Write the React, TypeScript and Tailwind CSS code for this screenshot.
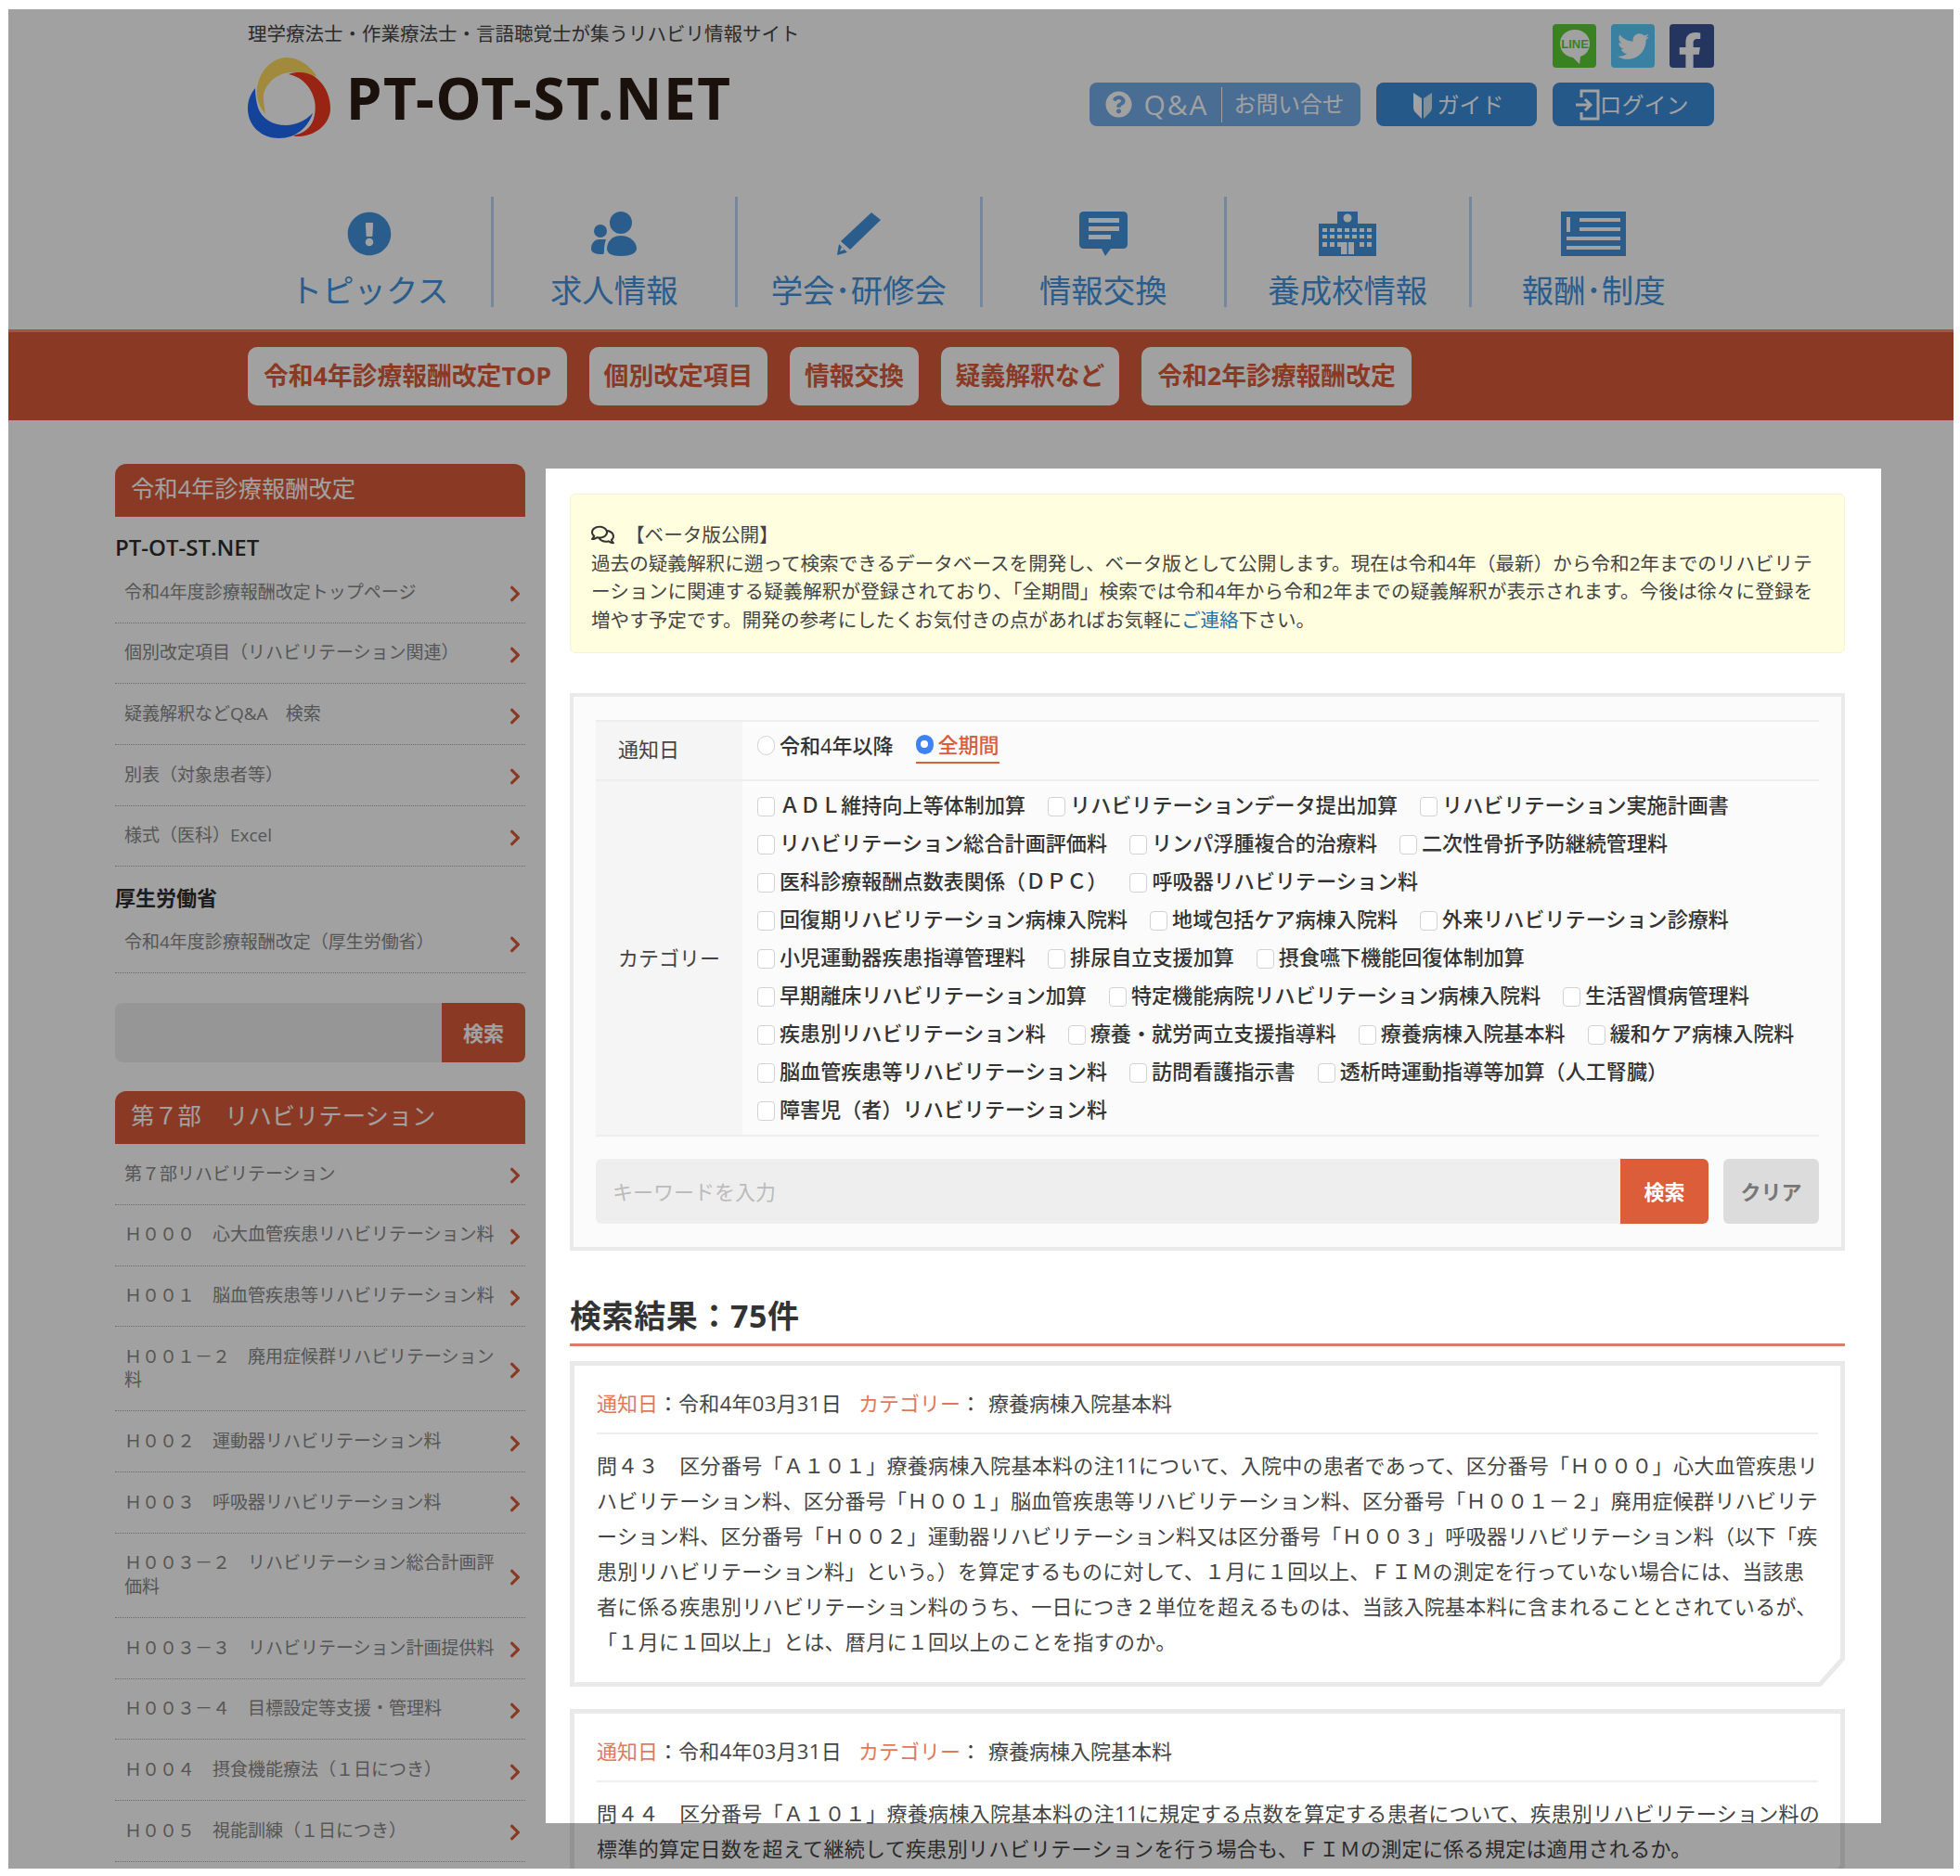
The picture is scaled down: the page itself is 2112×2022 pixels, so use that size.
import React from "react";
import {
  FaChevronRight,
  FaExclamationCircle,
  FaFacebookF,
  FaQuestionCircle,
  FaRegComments,
  FaTwitter,
} from "react-icons/fa";

const checkRows = [
  ["ＡＤＬ維持向上等体制加算", "リハビリテーションデータ提出加算", "リハビリテーション実施計画書"],
  ["リハビリテーション総合計画評価料", "リンパ浮腫複合的治療料", "二次性骨折予防継続管理料"],
  ["医科診療報酬点数表関係（ＤＰＣ）", "呼吸器リハビリテーション料"],
  ["回復期リハビリテーション病棟入院料", "地域包括ケア病棟入院料", "外来リハビリテーション診療料"],
  ["小児運動器疾患指導管理料", "排尿自立支援加算", "摂食嚥下機能回復体制加算"],
  ["早期離床リハビリテーション加算", "特定機能病院リハビリテーション病棟入院料", "生活習慣病管理料"],
  ["疾患別リハビリテーション料", "療養・就労両立支援指導料", "療養病棟入院基本料", "緩和ケア病棟入院料"],
  ["脳血管疾患等リハビリテーション料", "訪問看護指示書", "透析時運動指導等加算（人工腎臓）"],
  ["障害児（者）リハビリテーション料"],
];

const part7 = [
  "第７部リハビリテーション",
  "Ｈ０００　心大血管疾患リハビリテーション料",
  "Ｈ００１　脳血管疾患等リハビリテーション料",
  "Ｈ００１－２　廃用症候群リハビリテーション料",
  "Ｈ００２　運動器リハビリテーション料",
  "Ｈ００３　呼吸器リハビリテーション料",
  "Ｈ００３－２　リハビリテーション総合計画評価料",
  "Ｈ００３－３　リハビリテーション計画提供料",
  "Ｈ００３－４　目標設定等支援・管理料",
  "Ｈ００４　摂食機能療法（１日につき）",
  "Ｈ００５　視能訓練（１日につき）",
];

const pills = [
  { label: "令和4年診療報酬改定TOP", width: "w-[344px]" },
  { label: "個別改定項目", width: "w-[192px]" },
  { label: "情報交換", width: "w-[139px]" },
  { label: "疑義解釈など", width: "w-[192px]" },
  { label: "令和2年診療報酬改定", width: "w-[291px]" },
];

const q43 = [
  "問４３　区分番号「Ａ１０１」療養病棟入院基本料の注11について、入院中の患者であって、区分番号「Ｈ０００」心大血管疾患リ",
  "ハビリテーション料、区分番号「Ｈ００１」脳血管疾患等リハビリテーション料、区分番号「Ｈ００１－２」廃用症候群リハビリテ",
  "ーション料、区分番号「Ｈ００２」運動器リハビリテーション料又は区分番号「Ｈ００３」呼吸器リハビリテーション料（以下「疾",
  "患別リハビリテーション料」という。）を算定するものに対して、１月に１回以上、ＦＩＭの測定を行っていない場合には、当該患",
  "者に係る疾患別リハビリテーション料のうち、一日につき２単位を超えるものは、当該入院基本料に含まれることとされているが、",
  "「１月に１回以上」とは、暦月に１回以上のことを指すのか。",
];

const q44 = [
  "問４４　区分番号「Ａ１０１」療養病棟入院基本料の注11に規定する点数を算定する患者について、疾患別リハビリテーション料の",
  "標準的算定日数を超えて継続して疾患別リハビリテーションを行う場合も、ＦＩＭの測定に係る規定は適用されるか。",
];

function UsersIcon() {
  return (
    <svg width="50" height="48" viewBox="0 0 50 48" fill="#4394de">
      <circle cx="32" cy="12" r="12" />
      <path d="M32 26C22 26 17 33 17 40C17 45 22 48 32 48C42 48 49 45 49 40C49 33 42 26 32 26Z" />
      <circle cx="10" cy="21" r="7" />
      <path d="M9 30C3 30 0 35 0 40C0 44 4 46 12 46C14 46 14 44 14 41C14 37 15 33 16 30Z" />
    </svg>
  );
}

function PencilIcon() {
  return (
    <svg width="49" height="48" viewBox="0 0 49 48" fill="#4394de">
      <path d="M38 1L48 9L15 41L5 32Z" />
      <path d="M3 35L12 44L1 47Z" />
      <path d="M6 38L9 41L4 43Z" fill="#fff" />
    </svg>
  );
}

function ChatIcon() {
  return (
    <svg width="52" height="48" viewBox="0 0 52 48">
      <path d="M5 0H47Q52 0 52 5V35Q52 40 47 40H34L28 48L24 40H5Q0 40 0 35V5Q0 0 5 0Z" fill="#4394de" />
      <rect x="10" y="7" width="33" height="5" fill="#fff" />
      <rect x="10" y="16" width="33" height="5" fill="#fff" />
      <rect x="10" y="25" width="24" height="5" fill="#fff" />
    </svg>
  );
}

function SchoolIcon() {
  const cols = [4, 12, 20, 28, 36, 44, 52];
  return (
    <svg width="62" height="48" viewBox="0 0 62 48">
      <rect x="20" y="0" width="22" height="16" fill="#4394de" />
      <rect x="0" y="13" width="62" height="35" fill="#4394de" />
      <circle cx="31" cy="7" r="4.5" fill="#fff" />
      {[18, 25].map((y) => cols.map((x) => <rect key={x + "-" + y} x={x} y={y} width="5" height="4" fill="#fff" />))}
      {cols.filter((x) => x < 24 || x > 36).map((x) => <rect key={x} x={x} y="33" width="5" height="5" fill="#fff" />)}
      <rect x="24" y="33" width="14" height="13" fill="#fff" />
      <rect x="30.5" y="33" width="1.5" height="13" fill="#4394de" />
    </svg>
  );
}

function NewsIcon() {
  return (
    <svg width="70" height="48" viewBox="0 0 70 48">
      <rect width="70" height="48" fill="#4394de" />
      <rect x="6" y="6" width="4" height="16" fill="#fff" />
      <rect x="20" y="7" width="44" height="4" fill="#fff" />
      <rect x="20" y="17" width="44" height="4" fill="#fff" />
      <rect x="6" y="27" width="58" height="4" fill="#fff" />
      <rect x="6" y="37" width="58" height="4" fill="#fff" />
    </svg>
  );
}

function LogoMark() {
  return (
    <svg width="89" height="87" viewBox="0 0 89 87">
      <path d="M19 61C10 50 9 40 10 33C13 12 28 0 42 0C56 0 68 10 74 20L71 21C62 17 52 15 42 16.5C28 19 16 32 17 44C17.5 51 18 56 19 61Z" fill="#ffdb60" />
      <path d="M44 18C55 14 68 16 76 24C85 32 89 44 89 55C89 72 72 86 51 85L49 84C60 82 68 76 71 66C76 50 70 34 59 25C54 21 49 19 44 18Z" fill="#f23a20" />
      <path d="M8 33C2 40 0 48 0 55C0 74 15 87 34 87C52 87 65 75 70 60C62 68 52 73 41 73C27 73 15 66 11 54C9 47 8 40 8 33Z" fill="#1f6af5" />
    </svg>
  );
}

function NavItem({ icon, label, last }: { icon: React.ReactNode; label: string; last?: boolean }) {
  return (
    <div className={"w-[263.5px] shrink-0 h-[119px] pt-4 flex flex-col items-center " + (last ? "" : "border-r-[3px] border-[#bcd6f5]")}>
      <div className="h-12 flex items-center">{icon}</div>
      <div className="mt-5 text-[34.4px] leading-[34px] text-[#4394de] whitespace-nowrap">{label}</div>
    </div>
  );
}

function SideRow({ text }: { text: string }) {
  return (
    <div className="flex items-center justify-between pl-[10px] pr-px py-[19.6px] border-b border-dotted border-[#aaa] text-[19px] leading-[25.5px] text-[#888]">
      <span className="w-[400px]">{text}</span>
      <FaChevronRight className="shrink-0 mt-1 text-[#db5d3a]" size={20} />
    </div>
  );
}

function SideHead({ children, top }: { children: React.ReactNode; top: string }) {
  return (
    <div className={top + " h-[57px] bg-[#db5d3a] rounded-t-xl pl-[17px] pb-[3px] flex items-center text-[25.3px] text-white"}>
      {children}
    </div>
  );
}

function CheckItem({ label }: { label: string }) {
  return (
    <label className="flex items-center gap-[5px] whitespace-nowrap">
      <input type="checkbox" className="appearance-none w-[19px] h-[21px] mt-1 bg-white border border-[#d2d2d2] rounded" />
      {label}
    </label>
  );
}

function Corner() {
  return (
    <svg className="absolute -right-[5px] -bottom-[5px]" width="32" height="36" viewBox="0 0 32 36">
      <polygon points="32,0 32,36 0,36" fill="#fff" />
      <line x1="34" y1="1" x2="2" y2="37" stroke="#e9e9e9" strokeWidth="5" />
    </svg>
  );
}

function ResultCard({ lines }: { lines: string[] }) {
  return (
    <div className="relative mt-6 border-[5px] border-[#e9e9e9] px-[24px] pt-[25px] pb-[25px]">
      <div className="pb-[17px] border-b-2 border-[#eee] text-[22px] leading-[30px] text-[#444] whitespace-pre">
        <span className="text-[#e0795a]">通知日</span>：<span className="tracking-[0.3px]">令和4年03月31日</span>
        <span className="ml-[18px] text-[#e0795a]">カテゴリー</span>：
        <span className="ml-2">療養病棟入院基本料</span>
      </div>
      <div className="mt-[14px] text-[22px] leading-[38px] text-[#444] tracking-[0.32px]">
        {lines.map((l) => (
          <div key={l} className="whitespace-nowrap">{l}</div>
        ))}
      </div>
      <Corner />
    </div>
  );
}

export default function App() {
  return (
    <div className="bg-white pt-[10px] pb-2 pl-[9px] pr-[7px] [font-family:'Open_Sans','Noto_Sans_CJK_JP',sans-serif]">
      <div className="relative h-[2004px] overflow-hidden bg-white">
        {/* dim layer over everything except the main panel */}
        <div className="absolute inset-0 z-10 bg-black/37" />

        <header className="pl-[258px] w-[1838px]">
          <div className="h-[202px] flex justify-between">
            <div className="pt-[14px]">
              <div className="text-[20.5px] leading-6 text-[#444]">理学療法士・作業療法士・言語聴覚士が集うリハビリ情報サイト</div>
              <div className="mt-[14px] flex items-center gap-[17px]">
                <LogoMark />
                <span className="text-[62px] leading-[87px] font-bold tracking-[1.6px] text-[#2a1a14] [font-family:'Noto_Sans',sans-serif]">PT-OT-ST.NET</span>
              </div>
            </div>
            <div className="pt-4 flex flex-col items-end gap-4">
              <div className="flex gap-4">
                <div className="w-[47px] h-[47px] rounded bg-[#5dcd35] flex items-center justify-center">
                  <svg width="38" height="40" viewBox="0 0 38 40">
                    <path d="M19 2C9 2 3 9 3 17C3 26 10 31 17 32L24 39L25 31C31 29 35 24 35 17C35 9 29 2 19 2Z" fill="#fff" />
                    <text x="19" y="22" textAnchor="middle" fontSize="13" fontWeight="700" fill="#5dcd35" fontFamily="Liberation Sans, sans-serif">LINE</text>
                  </svg>
                </div>
                <div className="w-[47px] h-[47px] rounded bg-[#5dcdff] flex items-center justify-center text-white"><FaTwitter size={34} /></div>
                <div className="w-[48px] h-[47px] rounded bg-[#3a5598] flex items-end justify-end pr-[5px] text-white overflow-hidden"><FaFacebookF size={42} className="-mb-1" /></div>
              </div>
              <div className="flex gap-[17px] text-white">
                <div className="w-[292px] h-[47px] rounded-lg bg-[#75adeb] flex items-center justify-center">
                  <FaQuestionCircle size={29} />
                  <span className="ml-[12px] text-[30px] tracking-[2px] leading-none">Q&amp;A</span>
                  <span className="mx-[13px] w-px h-[38px] bg-white" />
                  <span className="text-[23.8px] leading-none">お問い合せ</span>
                </div>
                <div className="w-[173px] h-[47px] rounded-lg bg-[#3b8ddb] flex items-center justify-center gap-[6px] pl-1">
                  <svg width="20" height="30" viewBox="0 0 20 30" fill="#fff">
                    <path d="M0 2L9 8V30L2 23Q0 21 0 18Z" />
                    <path d="M20 2L11 8V30L18 23Q20 21 20 18Z" opacity="0.75" />
                  </svg>
                  <span className="text-[24px] leading-none">ガイド</span>
                </div>
                <div className="w-[174px] h-[47px] rounded-lg bg-[#3b8ddb] flex items-center justify-center pr-[3px]">
                  <svg width="26" height="34" viewBox="0 0 26 34" fill="none" stroke="#fff" strokeWidth="3">
                    <path d="M6 9V2H24V32H6V25" />
                    <path d="M0 17H16M10 11L16 17L10 23" />
                  </svg>
                  <span className="text-[24px] leading-none">ログイン</span>
                </div>
              </div>
            </div>
          </div>
          <nav className="flex ml-px">
            <NavItem icon={<FaExclamationCircle size={48} className="text-[#4394de]" />} label="トピックス" />
            <NavItem icon={<UsersIcon />} label="求人情報" />
            <NavItem icon={<PencilIcon />} label="学会･研修会" />
            <NavItem icon={<ChatIcon />} label="情報交換" />
            <NavItem icon={<SchoolIcon />} label="養成校情報" />
            <NavItem icon={<NewsIcon />} label="報酬･制度" last />
          </nav>
        </header>

        <div className="mt-6 h-[98px] bg-[#db5d3a] border-t-[3px] border-[#f09070] pl-[258px] pt-4 flex gap-6">
          {pills.map((p) => (
            <div key={p.label} className={p.width + " h-[63px] rounded-[10px] bg-white flex items-center justify-center text-[26.8px] font-bold text-[#db5d3a] whitespace-nowrap"}>
              {p.label}
            </div>
          ))}
        </div>

        <div className="mt-[47px] pl-[115px] flex items-start">
          <aside className="w-[442px] shrink-0">
            <SideHead top="">令和4年診療報酬改定</SideHead>
            <h3 className="pt-[21px] h-[49px] text-[24px] leading-6 font-semibold text-[#2d2d2d]">PT-OT-ST.NET</h3>
            {["令和4年度診療報酬改定トップページ", "個別改定項目（リハビリテーション関連）", "疑義解釈などQ&A　検索", "別表（対象患者等）", "様式（医科）Excel"].map((t) => (
              <SideRow key={t} text={t} />
            ))}
            <h3 className="pt-[21px] h-[49px] text-[22px] leading-6 font-bold text-[#2d2d2d]">厚生労働省</h3>
            <SideRow text="令和4年度診療報酬改定（厚生労働省）" />
            <div className="mt-8 flex h-16">
              <div className="flex-1 bg-[#eee] rounded-l-lg" />
              <div className="w-[90px] bg-[#db5d3a] rounded-r-lg flex items-center justify-center text-[22px] font-bold text-white">検索</div>
            </div>
            <SideHead top="mt-[31px]">第７部　リハビリテーション</SideHead>
            {part7.map((t) => (
              <SideRow key={t} text={t} />
            ))}
          </aside>

          <main className="relative z-20 ml-[22px] mt-[5px] w-[1439px] shrink-0 bg-white pl-[26px] pr-[39px] pt-[27px]">
            <div className="h-[172px] bg-[#ffffe0] border border-[#f3f3d8] rounded-md pt-[28px] pl-[22px] text-[20.6px] leading-[30.5px] text-[#444] whitespace-nowrap">
              <div className="flex items-center">
                <FaRegComments size={25} className="mr-[12px] text-[#333]" />
                <span>【ベータ版公開】</span>
              </div>
              <div>過去の疑義解釈に遡って検索できるデータベースを開発し、ベータ版として公開します。現在は令和4年（最新）から令和2年までのリハビリテ</div>
              <div className="tracking-[0.16px]">ーションに関連する疑義解釈が登録されており、「全期間」検索では令和4年から令和2年までの疑義解釈が表示されます。今後は徐々に登録を</div>
              <div>
                増やす予定です。開発の参考にしたくお気付きの点があればお気軽に<span className="text-[#2a6da8]">ご連絡</span>下さい。
              </div>
            </div>

            <section className="mt-[43px] border-4 border-[#eaeaea] bg-[#fbfbfb] px-[24px] pt-[25px] pb-[25px]">
              <div className="flex h-[66px] border-y-2 border-[#eee]">
                <div className="w-[158px] shrink-0 bg-[#f5f5f5] pl-6 pb-1 flex items-center text-[22px] text-[#444]">通知日</div>
                <div className="pl-4 pt-[5px] flex gap-6 text-[22px] leading-8 font-medium text-[#333]">
                  <label className="flex h-10 items-center gap-[5px]">
                    <span className="w-[19px] h-[21px] rounded-full bg-white border border-[#d2d2d2]" />
                    令和4年以降
                  </label>
                  <label className="flex h-10 items-center gap-[5px] border-b-2 border-[#db5d3a] text-[#db5d3a]">
                    <span className="w-[19px] h-[21px] rounded-full bg-[#3f83f0] flex items-center justify-center">
                      <span className="w-2 h-2 rounded-full bg-white" />
                    </span>
                    全期間
                  </label>
                </div>
              </div>
              <div className="flex border-b-2 border-[#eee]">
                <div className="w-[158px] shrink-0 bg-[#f5f5f5] pl-6 flex items-center text-[22px] text-[#444]">カテゴリー</div>
                <div className="pl-4 pt-[5px] pb-[7px] text-[22px] leading-[41px] font-medium tracking-[0.09px] text-[#333]">
                  {checkRows.map((row) => (
                    <div key={row[0]} className="flex gap-6 h-[41px]">
                      {row.map((c) => (
                        <CheckItem key={c} label={c} />
                      ))}
                    </div>
                  ))}
                </div>
              </div>
              <div className="mt-6 flex h-[70px]">
                <input
                  placeholder="キーワードを入力"
                  className="flex-1 min-w-0 bg-[#eee] rounded-l-md pl-[18px] text-[22px] outline-none placeholder:text-[#bbb]"
                />
                <div className="w-[95px] bg-[#db5d3a] rounded-r-md flex items-center justify-center text-[22px] font-bold text-white">検索</div>
                <div className="ml-4 w-[103px] bg-[#dcdcdc] rounded-md flex items-center justify-center text-[22px] font-bold text-[#777]">クリア</div>
              </div>
            </section>

            <h2 className="mt-[48px] pb-2 border-b-[3px] border-[#d6806a] text-[34px] leading-[44px] font-bold tracking-[0.6px] text-[#333]">検索結果：75件</h2>
            <div className="-mt-2">
              <ResultCard lines={q43} />
              <ResultCard lines={q44} />
            </div>
          </main>
        </div>

        {/* dim band over the bottom of the panel */}
        <div className="absolute z-30 left-[579px] w-[1439px] top-[1955px] bottom-0 bg-black/37" />
      </div>
    </div>
  );
}
